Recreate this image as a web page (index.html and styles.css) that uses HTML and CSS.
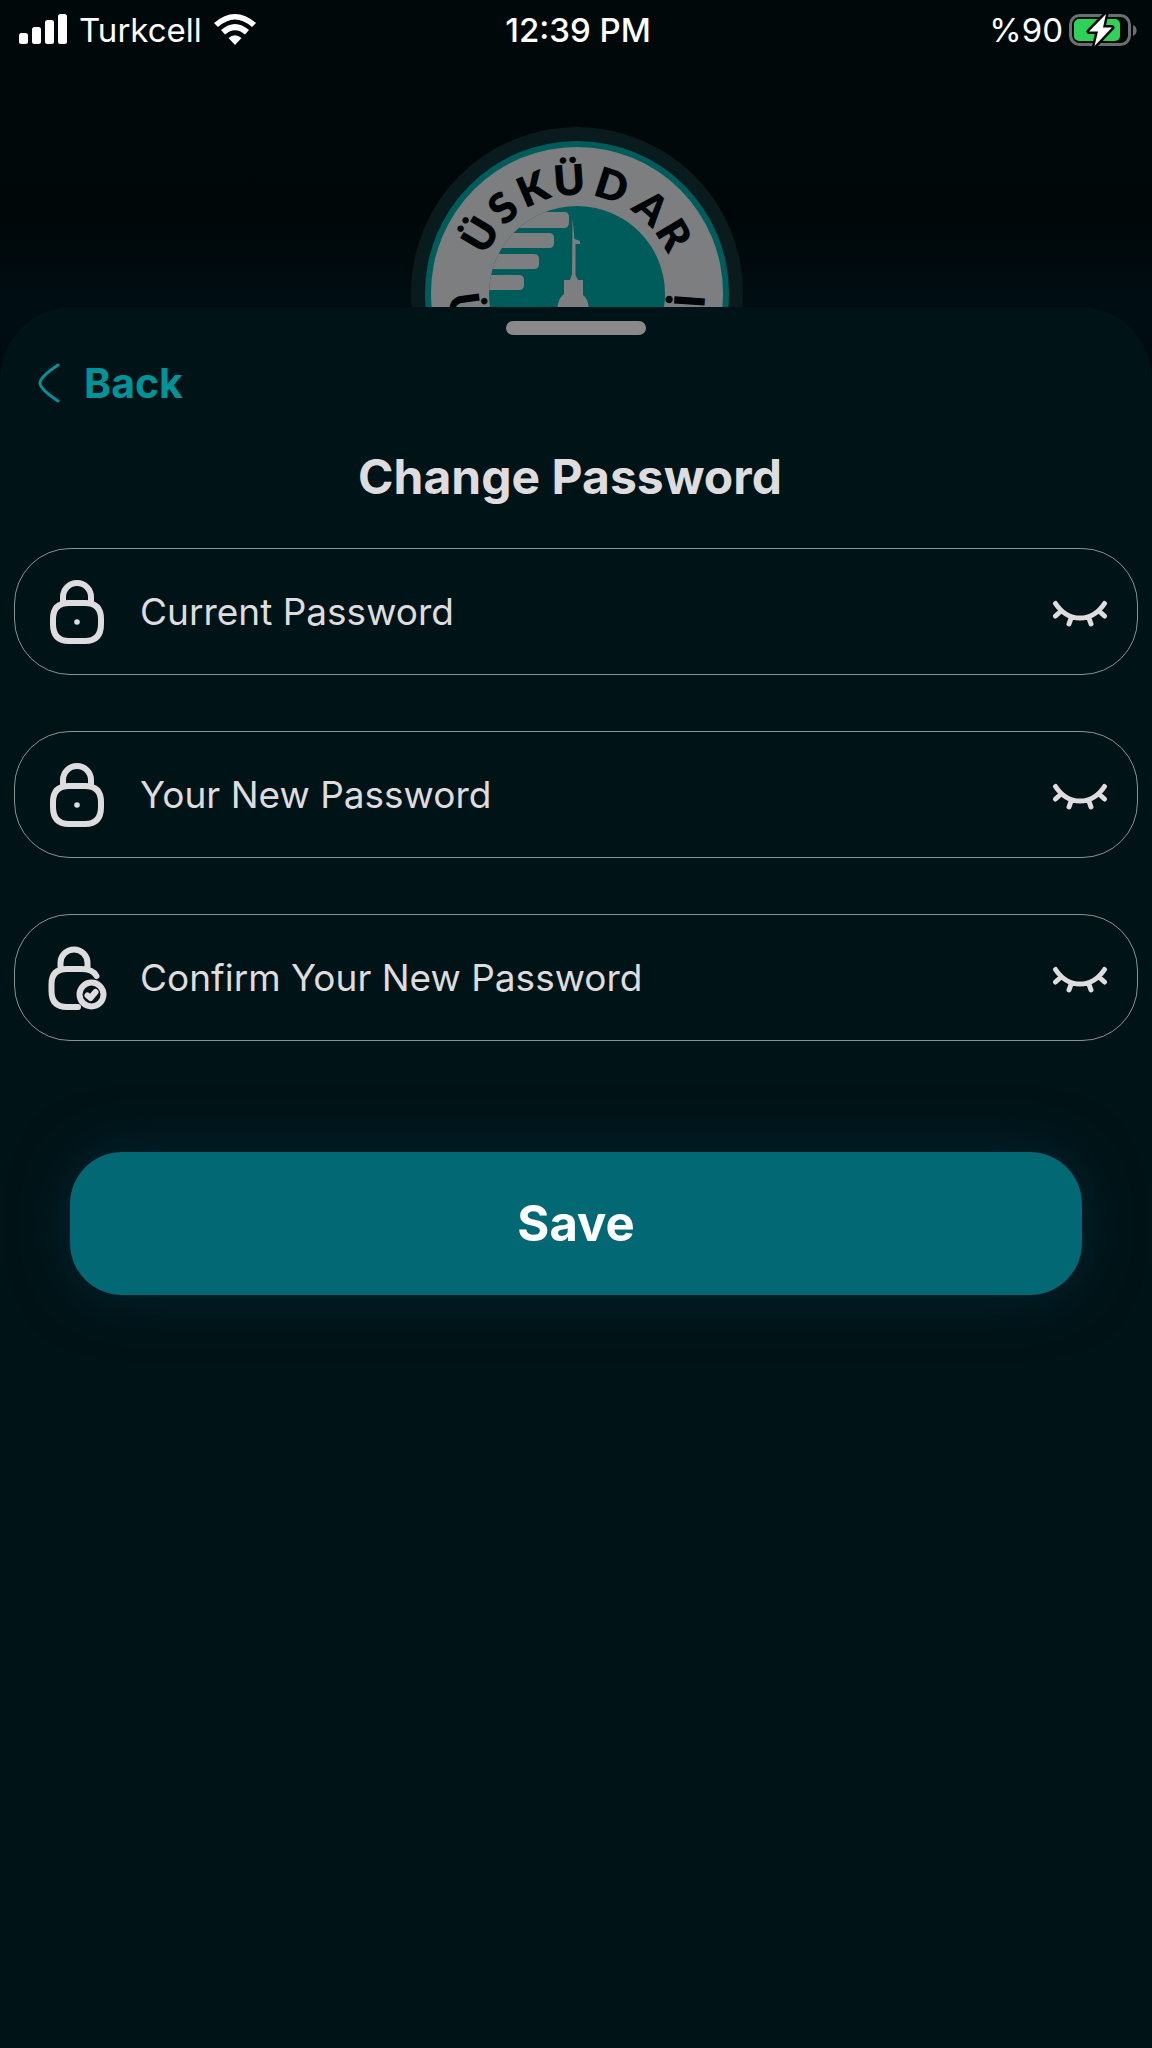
FILE: index.html
```html
<!DOCTYPE html>
<html lang="en">
<head>
<meta charset="utf-8">
<meta name="viewport" content="width=device-width, initial-scale=1">
<title>Change Password</title>
<link rel="stylesheet" href="styles.css">
</head>
<body>
<svg class="defs" aria-hidden="true">
  <symbol id="lock" viewBox="0 0 60 68">
    <path d="M15 24V19a14 14 0 0 1 28 0V24M21 25H37Q53 25 53 41V46Q53 63 37 63H21Q5 63 5 46V41Q5 25 21 25Z"/>
    <circle class="dot" cx="29" cy="44" r="2.800"/>
  </symbol>
  <symbol id="lock-check" viewBox="0 0 60 68">
    <path d="M12.500 24V19a13.500 13.500 0 0 1 27 0V24M30 63H19Q3.500 63 3.500 47V40Q3.500 25 19 25H33Q45 25 48.500 32"/>
    <circle cx="43.500" cy="50.500" r="12"/>
    <path d="M39.500 51.500L42.500 54L47.500 48"/>
  </symbol>
  <symbol id="eye-closed" viewBox="0 0 60 30">
    <path d="M5.500 6.500Q15 21 30 21T54.500 6.500M11 14L5.500 19M49 14L54.500 19M21.500 20L19 27M38.500 20L41 27"/>
  </symbol>
</svg>

<div class="screen">
  <header class="status">
    <div class="status-left">
      <svg class="signal" viewBox="0 0 48 32" aria-hidden="true">
        <rect x="0" y="19" width="9" height="11" rx="2.500"/><rect x="13" y="13" width="9" height="17" rx="2.500"/><rect x="26" y="6" width="9" height="24" rx="2.500"/><rect x="39" y="0" width="9" height="30" rx="2.500"/>
      </svg>
      <span>Turkcell</span>
      <svg class="wifi" viewBox="0 0 42 32" aria-hidden="true">
        <path d="M0 9Q21-9 42 9L38 13Q21-2 4 13ZM7 16Q21 4 35 16L31 20.500Q21 12 11 20.500ZM14.500 24Q21 18.500 27.500 24L21 31Z"/>
      </svg>
    </div>
    <time class="clock">12:39 PM</time>
    <div class="status-right">
      <span>%90</span>
      <svg class="battery" viewBox="0 0 68 34" aria-hidden="true">
        <rect class="case" x="1.500" y="2.500" width="59" height="29" rx="9"/>
        <path class="tip" d="M64 12a6 6 0 0 1 0 11Z"/>
        <rect class="charge" x="5" y="6" width="46" height="22" rx="5"/>
        <path class="bolt" d="M37 1L20 18.500H29L25.500 33L43 14.500H34Z"/>
      </svg>
    </div>
  </header>

  <div class="hero">
    <svg class="logo" viewBox="0 0 340 340" role="img" aria-label="Üsküdar">
      <defs><clipPath id="disc"><circle cx="171" cy="171" r="88"/></clipPath></defs>
      <circle class="halo" cx="171" cy="170" r="166"/>
      <circle class="teal" cx="171" cy="170" r="152"/>
      <circle class="ring" cx="171" cy="170" r="146"/>
      <circle class="teal" cx="171" cy="171" r="88"/>
      <g class="ring" clip-path="url(#disc)">
        <path d="M60 89H158Q163 89 163 94V99Q163 105 158 105H60Z"/>
        <path d="M60 110H143Q148 110 148 115V120Q148 125 143 125H60Z"/>
        <path d="M60 131H128Q133 131 133 136V141Q133 146 128 146H60Z"/>
        <path d="M60 152H113Q118 152 118 157V162Q118 167 113 167H60Z"/>
        <path d="M60 78H140L130 91L100 104L88 124L78 145L60 151Z"/>
        <path d="M166.500 95L168.500 116L174 118V121H169.500V152L172 157H177V172Q183 176 183 190H151Q151 176 158 171V157H164L166 151Z"/>
      </g>
      <g class="lettering">
        <text x="171" y="72" transform="rotate(-59 171 170)">Ü</text>
        <text x="171" y="72" transform="rotate(-41 171 170)">S</text>
        <text x="171" y="72" transform="rotate(-23 171 170)">K</text>
        <text x="171" y="72" transform="rotate(-4 171 170)">Ü</text>
        <text x="171" y="72" transform="rotate(18 171 170)">D</text>
        <text x="171" y="72" transform="rotate(41 171 170)">A</text>
        <text x="171" y="72" transform="rotate(59 171 170)">R</text>
        <text x="171" y="298" transform="rotate(82 171 170)">Ü</text>
        <text x="171" y="298" transform="rotate(-86 171 170)">İ</text>
      </g>
    </svg>
  </div>

  <main class="sheet">
    <div class="grabber"></div>
    <button class="back" type="button">
      <svg viewBox="0 0 22 40" aria-hidden="true"><path d="M20 2Q2 14 2 20T20 38"/></svg>
      <span>Back</span>
    </button>
    <h1>Change Password</h1>
    <form class="form">
      <div class="field">
        <svg class="icon" aria-hidden="true"><use href="#lock"/></svg>
        <input type="password" aria-label="Current Password" placeholder="Current Password">
        <button class="toggle" type="button" aria-label="Show password"><svg aria-hidden="true"><use href="#eye-closed"/></svg></button>
      </div>
      <div class="field">
        <svg class="icon" aria-hidden="true"><use href="#lock"/></svg>
        <input type="password" aria-label="Your New Password" placeholder="Your New Password">
        <button class="toggle" type="button" aria-label="Show password"><svg aria-hidden="true"><use href="#eye-closed"/></svg></button>
      </div>
      <div class="field">
        <svg class="icon" aria-hidden="true"><use href="#lock-check"/></svg>
        <input type="password" aria-label="Confirm Your New Password" placeholder="Confirm Your New Password">
        <button class="toggle" type="button" aria-label="Show password"><svg aria-hidden="true"><use href="#eye-closed"/></svg></button>
      </div>
      <button class="save" type="submit">Save</button>
    </form>
  </main>
</div>
</body>
</html>
```
FILE: styles.css
```css
* { box-sizing: border-box; }

body {
  margin: 0;
  background: #00080a;
  color: #dedcde;
  font-family: Inter, "Liberation Sans", sans-serif;
}

button {
  padding: 0;
  border: 0;
  background: none;
  color: inherit;
  font: inherit;
}

.defs { position: absolute; width: 0; height: 0; }

.screen {
  display: flex;
  flex-direction: column;
  min-height: 100vh;
  background: linear-gradient(#00080a, #000709 220px, #000e13 307px, #00090d 400px);
}

.status {
  display: grid;
  grid-template-columns: 1fr auto 1fr;
  align-items: center;
  height: 60px;
  padding: 0 15px 0 19px;
  color: #fff;
  font-size: 33px;
  line-height: 40px;
}
.status-left, .status-right { display: flex; align-items: center; }
.status-left { gap: 12px; }
.status-right { gap: 6px; justify-content: flex-end; }
.clock { font-weight: 500; }
.signal { width: 48px; height: 32px; fill: #fff; }
.wifi { width: 42px; height: 32px; fill: #fff; }
.battery { width: 68px; height: 34px; }
.case { fill: none; stroke: #6b6f70; stroke-width: 3; }
.tip { fill: #6b6f70; }
.charge { fill: #30d158; }
.bolt { fill: #fff; stroke: #00080a; stroke-width: 5; stroke-linejoin: round; paint-order: stroke; }

.hero {
  display: flex;
  justify-content: center;
  height: 247px;
  padding-top: 63px;
  overflow: hidden;
}
.logo { flex: none; width: 340px; height: 340px; }
.halo { fill: #091b1c; }
.teal { fill: #005c5a; }
.ring { fill: #7c7e80; }
.lettering {
  fill: #000507;
  font-family: Lato, sans-serif;
  font-size: 42px;
  font-weight: 800;
  text-anchor: middle;
}

.sheet {
  flex: 1;
  display: flex;
  flex-direction: column;
  padding: 14px 14px 0;
  border-radius: 72px 72px 0 0;
  background: #001316;
}
.grabber {
  align-self: center;
  width: 140px;
  height: 14px;
  border-radius: 7px;
  background: #898989;
}
.back {
  align-self: flex-start;
  display: flex;
  align-items: center;
  gap: 24px;
  margin: 24px 0 0 24px;
  color: #029299;
  font-size: 41px;
  font-weight: 700;
  line-height: 48px;
}
.back svg { width: 22px; height: 40px; fill: none; stroke: currentColor; stroke-width: 3; stroke-linecap: round; }

h1 {
  margin: 40px 12px 41px 0;
  font-size: 48px;
  font-weight: 700;
  line-height: 60px;
  text-align: center;
}

.form { display: flex; flex-direction: column; gap: 56px; }
.field {
  display: flex;
  align-items: center;
  gap: 32px;
  height: 127px;
  padding: 0 27px 0 33px;
  border: 1px solid #879493;
  border-radius: 56px;
}
.field svg { fill: none; stroke: #dedcde; stroke-width: 5; stroke-linecap: round; stroke-linejoin: round; }
.field .icon { flex: none; width: 60px; height: 68px; stroke-width: 6; }
.dot { fill: #dedcde; stroke: none; }
.field input {
  flex: 1;
  min-width: 0;
  padding: 0;
  border: 0;
  outline: 0;
  background: none;
  color: #dedcde;
  font: 400 37px/48px Inter, "Liberation Sans", sans-serif;
}
.field input::placeholder { color: #dedcde; opacity: 1; }
.toggle svg { display: block; width: 60px; height: 30px; }

.save {
  height: 143px;
  margin: 55px 56px 0;
  border-radius: 52px;
  background: #026873;
  box-shadow: 0 0 56px #002635;
  color: #fff;
  font-size: 49px;
  font-weight: 700;
  line-height: 60px;
}
```
